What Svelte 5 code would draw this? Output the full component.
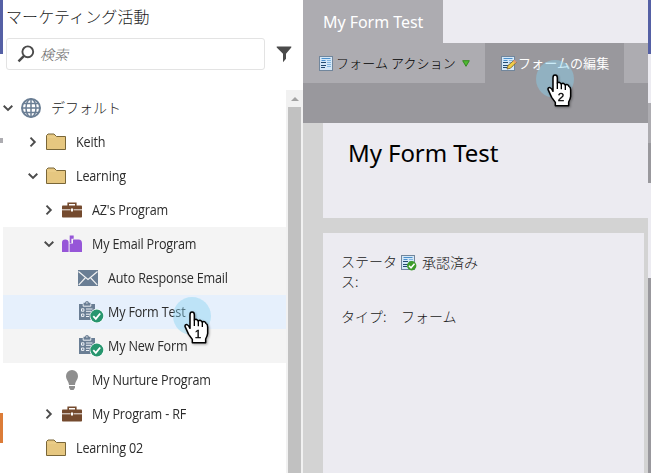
<script>
  const rows = [
    { label: 'デフォルト', icon: 'globe', pad: 0, open: true, jp: true },
    { label: 'Keith', icon: 'folder', pad: 25, open: false },
    { label: 'Learning', icon: 'folder', pad: 25, open: true },
    { label: "AZ's Program", icon: 'case', pad: 41, open: false },
    { label: 'My Email Program', icon: 'mailbox', pad: 41, open: true, tone: 'group' },
    { label: 'Auto Response Email', icon: 'mail', pad: 57, tone: 'group' },
    { label: 'My Form Test', icon: 'form', pad: 57, tone: 'selected' },
    { label: 'My New Form', icon: 'form', pad: 57, tone: 'group' },
    { label: 'My Nurture Program', icon: 'bulb', pad: 41 },
    { label: 'My Program - RF', icon: 'case', pad: 41, open: false },
    { label: 'Learning 02', icon: 'folder', pad: 25 }
  ];
  const edge = [
    ['#5560a5', 54], ['#ecebf1', 49], ['#adacb1', 40], ['#99989d', 40],
    ['#ecebf1', 95], ['#99989d', 195]
  ];
</script>

{#snippet sheet(kind)}
  <svg class="sheet" width="16" height="17" viewBox="0 0 16 17">
    <rect x=".5" y="1.5" width="13" height="14" fill="#d5e8f8" stroke="#71869c" />
    <path d="M2.5 3.5h9M2.5 5.5h4" stroke="#4b90cc" />
    <path d="M8 5.5h4M8 7.5h4M8 9.5h4M8 11.5h4" stroke="#83b6df" />
    <path d="M2 7.5h5M2 10.5h5M2 12.5h4" stroke="#244b70" />
    {#if kind === 'edit'}
      <path d="m6 14 1-3.5 6-5.2 2.2 2.2-5.7 5.7z" fill="#f1cf48" stroke="#765b25" stroke-width=".8" />
      <path d="m12 6.2 1.3-1.4 2.2 2.3-1.4 1.3z" fill="#e49b73" />
    {:else if kind === 'ok'}
      <circle cx="10.7" cy="11.8" r="4.7" fill="#3d9c2b" />
      <path d="m8 11.8 2 2 3.5-4" fill="none" stroke="#fff" stroke-width="1.5" />
    {/if}
  </svg>
{/snippet}

{#snippet hand(n)}
  <svg class="hand" width="28" height="36" viewBox="0 0 84 108">
    <path d="M18 52V11Q18 3 24 3Q31 3 31 11V27Q38 22 43 30Q50 25 55 33Q62 29 66 37Q71 39 71 48V67Q70 75 65 84V95H25V85L14 70L3 46Q3 40 9 41Q14 43 18 52Z" fill="#fff" stroke="#000" stroke-width="4.5" stroke-linejoin="round" />
    <path d="M31 26V45M43 29V46M55 32V48" stroke="#000" stroke-width="4" />
    <text x="42" y="82" text-anchor="middle">{n}</text>
  </svg>
{/snippet}

<div class="screen">
  <aside>
    <div class="rail"><i class="blue"></i><i class="gray"></i><i class="orange"></i></div>
    <h1>マーケティング活動</h1>
    <div class="search-row">
      <div class="search">
        <svg width="18" height="18" viewBox="0 0 18 18" fill="none" stroke="#4b4b4b"><circle cx="10.8" cy="6.8" r="5.4" stroke-width="1.9" /><path d="m7 10.8-5.5 5.5" stroke-width="2.4" /></svg>
        <em>検索</em>
      </div>
      <svg width="16" height="17" viewBox="0 0 16 17"><path d="M.7.5h14.6v1L10 7.7v5L7 16.3V7.7L.7 1.5z" fill="#4b4b4b" /></svg>
    </div>
    <div class="tree-wrap">
      <div class="tree">
        {#each rows as r}
          <div class="row {r.tone ?? ''}" style="padding-left:{r.pad}px">
            <span class="chev">
              {#if r.open !== undefined}
                <svg width="10" height="10" viewBox="0 0 10 10" fill="none" stroke="#4b4b4b" stroke-width="1.9">
                  <path d={r.open ? 'M.7 2.8 5 7l4.3-4.2' : 'M2.5.7 6.8 5 2.5 9.3'} />
                </svg>
              {/if}
            </span>
            <span class="icon">
              {#if r.icon === 'globe'}
                <svg width="20" height="20" viewBox="0 0 20 20" fill="none" stroke="#6a7e94" stroke-width="1.5"><circle cx="10" cy="10" r="9" stroke-width="2" /><ellipse cx="10" cy="10" rx="5" ry="9" /><path d="M10 1v18M1 10h18M3 5.4h14M3 14.6h14" /></svg>
              {:else if r.icon === 'folder'}
                <svg width="20" height="18" viewBox="0 0 20 18"><path d="M.5 16.5v-14L2 1h6l2.5 2.5h9v13z" fill="#e6c780" stroke="#796638" /><path d="M1 4h9" stroke="#f0d898" stroke-width=".7" /></svg>
              {:else if r.icon === 'case'}
                <svg width="20" height="16" viewBox="0 0 20 16"><path d="M6.2 4V1.2h7.6V4" fill="none" stroke="#744a2e" stroke-width="1.6" /><rect y="3.5" width="20" height="12" rx=".8" fill="#744a2e" /><path d="M0 7.8h8.5M11.5 7.8H20" stroke="#fff" stroke-width=".9" /><path d="M9 6.4h2v3.2H9z" fill="#fff" /></svg>
              {:else if r.icon === 'mailbox'}
                <svg width="20" height="18" viewBox="0 0 20 18" fill="#9656d8"><path d="M0 17V7.500Q0 4.500 3.300 4.500T6.600 7.500V17zM7.600 17V8.500H11V4.500h5.500q3.500 0 3.500 4V17z" /><path d="M7.700.5h4v3.200H9.400V8H7.700z" /></svg>
              {:else if r.icon === 'mail'}
                <svg width="20" height="16" viewBox="0 0 20 16"><path d="M0 0h20v16H0z" fill="#6a7e94" /><path d="m.5 1.5 9.5 8 9.5-8M.8 14.8 7.2 8M19.2 14.8 12.8 8" fill="none" stroke="#f4f4f4" stroke-width="1.1" /></svg>
              {:else if r.icon === 'form'}
                <svg width="26" height="22" viewBox="0 0 26 22"><path d="M1 3h4.5V1.8H7Q7.4 0 9 0t2 1.8h1.5V3H17v16H1z" fill="#6a7e94" /><path d="M5.2 3.2v2h7.6v-2M3.5 7.8h2.4v2.4H3.5zM3.5 13h2.4v2.4H3.5zM8 8h6.5M8 10.3h5M8 13.2h5M8 15.5h3" fill="none" stroke="#eef2f7" stroke-width="1" /><circle cx="8.9" cy="1.9" r=".7" fill="#fff" /><circle cx="18.8" cy="15" r="7.200" fill="#fff" /><circle cx="18.8" cy="15" r="6.500" fill="#27966e" /><path d="m15.300 15.200 2.500 2.600 4.400-5.300" fill="none" stroke="#fff" stroke-width="1.8" /></svg>
              {:else}
                <svg class="bulb" width="12" height="20" viewBox="0 0 12 20" fill="#8e8e8e"><path d="M6 0a6 6 0 0 1 6 6c0 4-2.8 5-3 9H3C2.800 11 0 10 0 6a6 6 0 0 1 6-6zM3 16h6v1.700L7.500 20h-3L3 17.700z" /></svg>
              {/if}
            </span>
            <span class="label" class:jp={r.jp}>{r.label}</span>
          </div>
        {/each}
      </div>
      <div class="scroll"><b></b><div></div></div>
    </div>
    <div class="click one"></div>
    <div class="pointer p1">{@render hand(1)}</div>
  </aside>

  <main>
    <div class="tabs"><div class="tab">My Form Test</div></div>
    <div class="tools">
      <div class="tool act">{@render sheet('plain')}<span>フォーム アクション</span><svg width="8" height="7" viewBox="0 0 8 7"><path d="M.7.7h6.600L4 6.300z" fill="#4fb832" stroke="#348a20" /></svg></div>
      <div class="tool edit">{@render sheet('edit')}<span>フォームの編集</span></div>
    </div>
    <div class="band"></div>
    <div class="content">
      <section class="head">My Form Test</section>
      <section class="info">
        <div class="line"><span class="key">ステータス:</span>{@render sheet('ok')}<span class="val">承認済み</span></div>
        <div class="line type"><span class="key">タイプ:</span><span>フォーム</span></div>
      </section>
    </div>
    <div class="click two"></div>
    <div class="pointer p2">{@render hand(2)}</div>
  </main>
  <div class="edge">
    {#each edge as [color, h]}<i style="background:{color};height:{h}px"></i>{/each}
  </div>
</div>

<style>
  :global(body) { margin: 0; overflow: hidden; background: #fff; }
  .screen { width: 651px; height: 473px; display: flex; overflow: hidden; font-family: "Noto Sans", "Noto Sans CJK JP", sans-serif; color: #1a1a1a; }
  svg { display: block; flex: none; }
  aside { position: relative; width: 303px; flex: none; display: flex; flex-direction: column; background: #fff; }
  .rail { position: absolute; left: 0; top: 0; width: 3px; height: 473px; display: flex; flex-direction: column; z-index: 2; }
  .rail i { height: 54px; background: #5560a5; }
  .rail .gray { margin-top: 84px; height: 5px; background: #adacb1; }
  .rail .orange { margin-top: 270px; height: 30px; background: #dc7c38; }
  h1 { margin: 0; padding: 4px 0 0 6px; height: 34px; box-sizing: border-box; font: 300 16px/24px "Noto Sans CJK JP", sans-serif; letter-spacing: .1px; white-space: nowrap; }
  .search-row { display: flex; align-items: center; margin: 4px 0 0 6px; gap: 11px; height: 32px; }
  .search { width: 259px; height: 32px; box-sizing: border-box; border: 1px solid #e3e3e3; border-radius: 3px; display: flex; align-items: center; padding-left: 10px; gap: 5px; }
  .search em { font: italic 300 14px/20px "Noto Sans CJK JP", sans-serif; color: #666; }
  .tree-wrap { margin-top: 20px; height: 383px; display: flex; }
  .tree { width: 283px; margin-left: 3px; padding-top: 1px; box-sizing: border-box; }
  .row { height: 34px; display: flex; align-items: center; box-sizing: border-box; }
  .group { background: #f4f4f4; }
  .selected { background: #e6f0fc; }
  .chev { width: 10px; margin-right: 8px; }
  .icon { width: 20px; display: flex; justify-content: flex-start; flex: none; }
  .bulb { margin-left: 4px; }
  .label { margin-left: 10px; font: 14px/20px "Open Sans", sans-serif; white-space: nowrap; letter-spacing: -.2px; color: #2c2c2c; transform: scaleX(.9); transform-origin: 0 50%; }
  .label.jp { font: 300 14px/20px "Noto Sans CJK JP", sans-serif; letter-spacing: 0; color: #222; margin-top: -2px; transform: none; }
  .scroll { width: 17px; background: #f1f1f1; display: flex; flex-direction: column; align-items: center; }
  .scroll b { width: 0; margin: 7px 0 6px; border: 4px solid transparent; border-top: 0; border-bottom-color: #a3a3a3; }
  .scroll div { width: 13px; flex: 1; background: #c1c1c1; }
  .click { position: absolute; width: 38px; height: 38px; border-radius: 50%; background: rgba(135, 210, 240, .43); }
  .one { left: 173px; top: 297px; }
  .two { left: 233px; top: 60px; }
  .pointer { position: absolute; filter: drop-shadow(1px 1px 1px #0005); }
  .p1 { left: 184px; top: 311px; }
  .p2 { left: 244px; top: 74px; }
  .hand text { font: 35px "Liberation Sans", sans-serif; fill: #000; stroke: #000; stroke-width: 1; }
  main { position: relative; width: 345px; flex: none; display: flex; flex-direction: column; background: #d3d3d3; }
  .tabs { height: 43px; background: #ecebf1; }
  .tab { width: 140px; height: 43px; box-sizing: border-box; padding-left: 20px; background: #adacb1; color: #fff; font-size: 16px; line-height: 44px; letter-spacing: -.04px; white-space: nowrap; }
  .tools { display: flex; height: 40px; background: #adacb1; }
  .tool { display: flex; align-items: center; box-sizing: border-box; font: 300 13px/20px "Noto Sans CJK JP", sans-serif; color: #000; padding-left: 16px; white-space: nowrap; }
  .tool span { margin-left: 1px; }
  .act span { letter-spacing: .1px; }
  .tool span + svg { margin-left: 6px; }
  .act { width: 182px; }
  .edit { width: 139px; background: #99989d; color: #fff; font-weight: 400; }
  .edit span { margin-left: 1px; letter-spacing: .1px; }
  .band { height: 40px; background: #99989d; }
  .content { padding-left: 20px; display: flex; flex-direction: column; gap: 15px; flex: 1; }
  .head { height: 95px; box-sizing: border-box; padding: 13px 0 0 25px; background: #ecebf1; font-size: 24px; line-height: 34px; letter-spacing: -.08px; color: #000; }
  .info { width: 321px; flex: 1; box-sizing: border-box; padding: 18px 0 0 18px; background: #ecebf1; font: 300 14px/20px "Noto Sans CJK JP", sans-serif; }
  .line { display: flex; }
  .key { width: 60px; box-sizing: border-box; padding-right: 3px; word-break: break-all; }
  .val { margin: 1px 0 0 5px; }
  .line .key + :global(svg) { margin-top: 3px; }
  .type { margin-top: 15px; }
  .edge { width: 3px; display: flex; flex-direction: column; }
  .edge i { flex: none; }
</style>
